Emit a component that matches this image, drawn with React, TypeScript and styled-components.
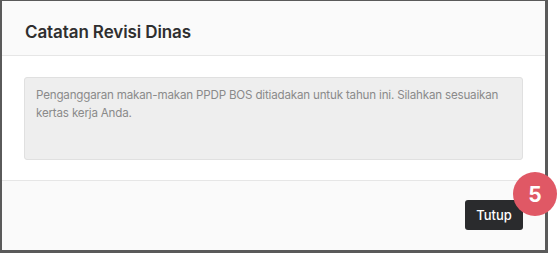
import React from "react";
import styled, { createGlobalStyle } from "styled-components";

const Global = createGlobalStyle`
  html, body { margin: 0; padding: 0; background: #ffffff; }
  body { font-family: Inter, "Noto Sans", sans-serif; }
`;

const Frame = styled.div`
  box-sizing: border-box;
  width: 548px;
  height: 253px;
  border-style: solid;
  border-color: #5a5a5a;
  border-width: 1px 3px 3px 2px;
  display: flex;
  flex-direction: column;
  background: #ffffff;
  position: relative;
`;

const Header = styled.div`
  height: 47px;
  background: #fafafa;
  border-bottom: 1px solid #e6e6e6;
  display: flex;
  align-items: center;
  padding: 7px 23px 0 23px;
  box-sizing: content-box;
`;

const Title = styled.h1`
  margin: 0;
  font-size: 17px;
  font-weight: 600;
  color: #2f2f2f;
  letter-spacing: -0.1px;
`;

const Body = styled.div`
  padding: 21px 22px 20px 22px;
  border-bottom: 1px solid #e6e6e6;
`;

const NoteBox = styled.div`
  box-sizing: border-box;
  height: 83px;
  background: #eeeeee;
  border: 1px solid #e0e0e0;
  border-radius: 3px;
  padding: 8px 11px;
  font-size: 11.6px;
  letter-spacing: -0.18px;
  line-height: 18px;
  color: #8a8a8a;
`;

const Footer = styled.div`
  flex: 1;
  background: #fafafa;
  display: flex;
  justify-content: flex-end;
  align-items: flex-start;
  padding: 19px 22px 0 22px;
`;

const CloseButton = styled.button`
  height: 30px;
  width: 58px;
  background: #2a2b2d;
  color: #ffffff;
  border: none;
  border-radius: 3px;
  font-family: Inter, "Noto Sans", sans-serif;
  font-size: 13px;
  font-weight: 500;
  cursor: pointer;
`;

const Badge = styled.div`
  position: absolute;
  left: 513px;
  top: 172px;
  width: 44px;
  height: 44px;
  border-radius: 50%;
  background: #e05865;
  color: #ffffff;
  font-family: Inter, "Noto Sans", sans-serif;
  font-weight: 700;
  font-size: 21px;
  display: flex;
  align-items: center;
  justify-content: center;
`;

export default function App() {
  return (
    <>
      <Global />
      <Frame>
        <Header>
          <Title>Catatan Revisi Dinas</Title>
        </Header>
        <Body>
          <NoteBox>
            Penganggaran makan-makan PPDP BOS ditiadakan untuk tahun ini. Silahkan sesuaikan kertas kerja Anda.
          </NoteBox>
        </Body>
        <Footer>
          <CloseButton>Tutup</CloseButton>
        </Footer>
      </Frame>
      <Badge>5</Badge>
    </>
  );
}
